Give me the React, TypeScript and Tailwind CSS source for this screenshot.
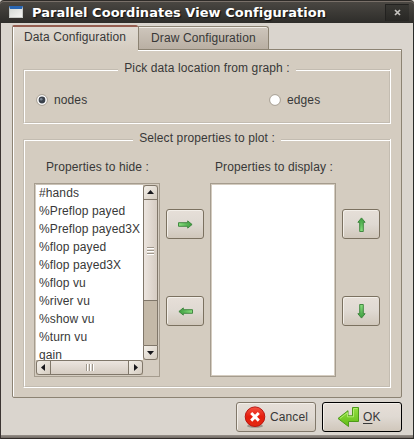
import type { ReactNode } from 'react';

const properties = ['#hands', '%Preflop payed', '%Preflop payed3X', '%flop payed', '%flop payed3X', '%flop vu', '%river vu', '%show vu', '%turn vu', 'gain'];

function GroupBox({ title, className, children }: { title: string; className: string; children: ReactNode }) {
  return (
    <section className={`w-[368px] shrink-0 border-r border-b border-l border-r-white border-b-white border-l-[#c3bcb1] ${className}`}>
      <div className="flex h-full flex-col border-r border-b border-l border-r-[#c3bcb1] border-b-[#c3bcb1] border-l-white">
        <div className="-mx-px -mt-[8px] flex h-[18px] shrink-0 items-center">
          <div className="h-[2px] flex-1 border-t border-b border-t-[#c3bcb1] border-b-white" />
          <div className="relative -top-[2px] px-[6px] leading-[14px]">{title}</div>
          <div className="h-[2px] flex-1 border-t border-b border-t-[#c3bcb1] border-b-white" />
        </div>
        {children}
      </div>
    </section>
  );
}

function Radio({ label, checked }: { label: string; checked?: boolean }) {
  return (
    <label className="flex h-[14px] items-center gap-[6px]">
      <svg width="12" height="12" viewBox="0 0 12 12">
        <circle cx="6" cy="6" r="5.4" fill="#fff" stroke="#a69e92" strokeWidth="1" />
        {checked && <circle cx="6" cy="6" r="3.4" fill="#3b424c" />}
        {checked && <circle cx="5.2" cy="5.2" r="1.3" fill="#7b8794" />}
      </svg>
      <span>{label}</span>
    </label>
  );
}

const rotations = { right: 'rotate(0 7.5 7.5)', down: 'rotate(90 7.5 7.5)', left: 'rotate(180 7.5 7.5)', up: 'rotate(270 7.5 7.5)' };

function ArrowButton({ dir }: { dir: keyof typeof rotations }) {
  return (
    <button className="flex h-[30px] w-[38px] items-center justify-center rounded-[3px] border border-[#7b7160] bg-linear-to-b from-[#e6dfd8] via-[#dfd9d2] to-[#d0c7bb] shadow-[inset_1px_1px_0_#f3efe9]">
      <svg width="15" height="15" viewBox="0 0 15 15">
        <defs>
          <linearGradient id={`g-${dir}`} x1="0" x2="1">
            <stop offset="0" stopColor="#8be081" />
            <stop offset="1" stopColor="#3a9b3c" />
          </linearGradient>
        </defs>
        <path transform={rotations[dir]} d="M.5 5.7h9.2V3.9l4.4 3.6-4.4 3.6V9.3H.5z" fill={`url(#g-${dir})`} stroke="#358037" strokeWidth=".9" />
      </svg>
    </button>
  );
}

function ScrollArrow({ d, className }: { d: string; className: string }) {
  return (
    <div className={`flex h-[15px] w-[15px] shrink-0 items-center justify-center border border-[#80776a] bg-linear-to-br from-[#f4f0ea] to-[#d5ccc0] ${className}`}>
      <svg width="7" height="7" viewBox="0 0 7 7"><path d={d} fill="#17171c" /></svg>
    </div>
  );
}

export default function App() {
  return (
    <main className="flex h-[439px] w-[414px] flex-col overflow-hidden bg-[#dad5ce] font-['Liberation_Sans',Arial,sans-serif] text-[12px] leading-[14px] tracking-[0.11px] text-[#383838]">
      <header className="flex h-[23px] shrink-0 items-center rounded-t-[4px] border-t border-[#2e2b28] bg-linear-to-b from-[#4b4843] to-[#2e2d2a] pl-[9px] shadow-[inset_0_1px_0_#797069]">
        <div className="h-[12px] w-[14px] border border-[#c9cbc8] border-t-[3px] border-t-[#2865b2] bg-linear-to-br from-[#d6dad6] to-[#f4f4f2]" />
        <h1 className="relative top-px ml-[9px] flex-1 whitespace-nowrap font-['DejaVu_Sans',sans-serif] text-[13px] font-bold leading-[16px] tracking-[0.03px] text-white [text-shadow:1px_1px_1px_#111]">Parallel Coordinates View Configuration</h1>
        <button className="mr-[5px] flex h-[17px] w-[24px] items-center justify-center rounded-[1px] border-t border-l border-[#22211f] bg-linear-to-b from-[#383733] to-[#282724]">
          <svg width="7" height="7" viewBox="0 0 7 7"><path d="M1 1l5 5M6 1L1 6" stroke="#c5c3bf" strokeWidth="1.7" /></svg>
        </button>
      </header>
      <div className="flex min-h-0 flex-1 flex-col border-r border-l border-r-[#292b29] border-l-[#3b3533]">
        <nav className="z-10 ml-[11px] flex h-[27px] shrink-0 items-end pt-[2px]">
          <div className="-mb-px h-[26px] w-[126px] rounded-t-[2px] border-t-2 border-l border-t-[#965f51] border-l-[#8c8373] bg-linear-to-b from-[#e0dbd3] to-[#d4ccc0] shadow-[inset_1px_0_0_white]">
            <div className="whitespace-nowrap pt-[3px] pl-[11px]">Data Configuration</div>
          </div>
          <div className="mb-px h-[23px] w-[131px] rounded-tr-[3px] border border-b-0 border-[#8c8373] bg-linear-to-b from-[#cec6bc] to-[#b9afa3] shadow-[inset_0_1px_0_#f1ede7]">
            <div className="whitespace-nowrap pt-[4px] pl-[12px]">Draw Configuration</div>
          </div>
        </nav>
        <div className="-mt-px ml-[11px] flex h-[349px] w-[390px] shrink-0 flex-col rounded-b-[2px] border border-[#8c8373] bg-[#d4ccc0] pt-[19px] pl-[10px] shadow-[inset_1px_1px_0_white]">
          <GroupBox title="Pick data location from graph :" className="h-[55px]">
            <div className="mt-[14px] flex pl-[11px]">
              <div className="w-[233px]"><Radio label="nodes" checked /></div>
              <Radio label="edges" />
            </div>
          </GroupBox>
          <GroupBox title="Select properties to plot :" className="mt-[15px] h-[249px]">
            <div className="mt-[11px] flex h-[14px] shrink-0">
              <span className="ml-[21px] w-[169px]">Properties to hide :</span>
              <span>Properties to display :</span>
            </div>
            <div className="mt-[9px] ml-[9px] flex shrink-0">
              <div className="flex h-[194px] w-[126px] border border-[#a59c8e] bg-[#d4ccc0] p-px">
                <div className="flex w-[107px] shrink-0 flex-col">
                  <ul className="h-[175px] overflow-hidden bg-white pl-[3px] shadow-[0_-1px_0_#c9c1b5]">
                    {properties.map((p) => <li key={p} className="h-[18px] whitespace-nowrap leading-[17px]">{p}</li>)}
                  </ul>
                  <div className="flex h-[15px] shrink-0 bg-[#c4b9a8]">
                    <ScrollArrow d="M5 0v7L1 3.5z" className="rounded-l-[3px]" />
                    <div className="-ml-px flex h-[15px] w-[79px] items-center justify-center gap-[2px] border border-[#80776a] bg-linear-to-b from-[#ece5df] to-[#d5ccc2]">
                      {[0, 1, 2].map((n) => <i key={n} className="h-[7px] w-px bg-[#9f978c] shadow-[1px_0_0_white]" />)}
                    </div>
                    <ScrollArrow d="M2 0v7l4-3.5z" className="-ml-px rounded-r-[3px]" />
                  </div>
                </div>
                <div className="flex h-[175px] w-[15px] flex-col bg-[#c4b9a8]">
                  <ScrollArrow d="M0 5h7L3.5 1z" className="rounded-t-[3px]" />
                  <div className="-mt-px flex h-[102px] w-[15px] flex-col items-center justify-center gap-[2px] border border-[#80776a] bg-linear-to-r from-[#ece5df] to-[#d5ccc2]">
                    {[0, 1, 2].map((n) => <i key={n} className="h-px w-[7px] bg-[#9f978c] shadow-[0_1px_0_white]" />)}
                  </div>
                  <div className="w-[15px] flex-1 border-x border-[#80776a]" />
                  <ScrollArrow d="M0 2h7L3.5 6z" className="rounded-b-[3px]" />
                </div>
              </div>
              <div className="mt-[26px] ml-[6px] flex w-[38px] flex-col gap-[57px]">
                <ArrowButton dir="right" />
                <ArrowButton dir="left" />
              </div>
              <div className="ml-[6px] h-[194px] w-[126px] border border-[#a59c8e] bg-white shadow-[inset_0_0_0_1px_#d4ccc0]" />
              <div className="mt-[26px] ml-[6px] flex w-[38px] flex-col gap-[57px]">
                <ArrowButton dir="up" />
                <ArrowButton dir="down" />
              </div>
            </div>
          </GroupBox>
        </div>
        <footer className="mt-[4px] flex h-[30px] shrink-0 justify-end gap-[6px] pr-[11px]">
          <button className="flex w-[80px] items-center rounded-[3px] border border-[#81786a] bg-linear-to-b from-[#e6dfd8] via-[#dfd9d2] to-[#d0c7bb] pl-[7px] shadow-[inset_1px_1px_0_#f3efe9]">
            <svg width="22" height="22" viewBox="0 0 22 22">
              <defs><linearGradient id="red" x2="0" y2="1"><stop stopColor="#f65343" /><stop offset=".5" stopColor="#e51d0d" /><stop offset="1" stopColor="#e42a12" /></linearGradient></defs>
              <ellipse cx="11" cy="20" rx="8" ry="1.7" fill="#9d958b" />
              <circle cx="11" cy="10.7" r="9.8" fill="url(#red)" stroke="#b91510" />
              <path d="M7.2 7l7.6 7.6M14.8 7l-7.6 7.6" stroke="white" strokeWidth="2.9" />
            </svg>
            <span className="ml-[4px]">Cancel</span>
          </button>
          <button className="flex w-[80px] items-center rounded-[3px] border border-black bg-linear-to-b from-[#e6dfd8] via-[#dfd9d2] to-[#d0c7bb] pl-[14px] shadow-[inset_1px_1px_0_#f3efe9]">
            <svg width="23" height="22" viewBox="0 0 23 22">
              <defs><linearGradient id="green" x2="0" y2="1"><stop stopColor="#93df42" /><stop offset="1" stopColor="#62bc16" /></linearGradient></defs>
              <path d="M15.5 1.5h6v14H11.5v5L1 12.5l10-7.8v5.1h4.5z" fill="url(#green)" stroke="#4d9a19" strokeLinejoin="round" />
              <path d="M16.5 2.5h4M3 12.4l7.5-5.8v4.2h6V3" fill="none" stroke="#bdf27d" strokeWidth=".8" />
            </svg>
            <span className="ml-[3px]"><u className="underline-offset-[2px]">O</u>K</span>
          </button>
        </footer>
        <div className="mt-auto h-[4px] border-b border-[#302b28] bg-linear-to-b from-[#98918a] to-[#6f6963]" />
      </div>
    </main>
  );
}
